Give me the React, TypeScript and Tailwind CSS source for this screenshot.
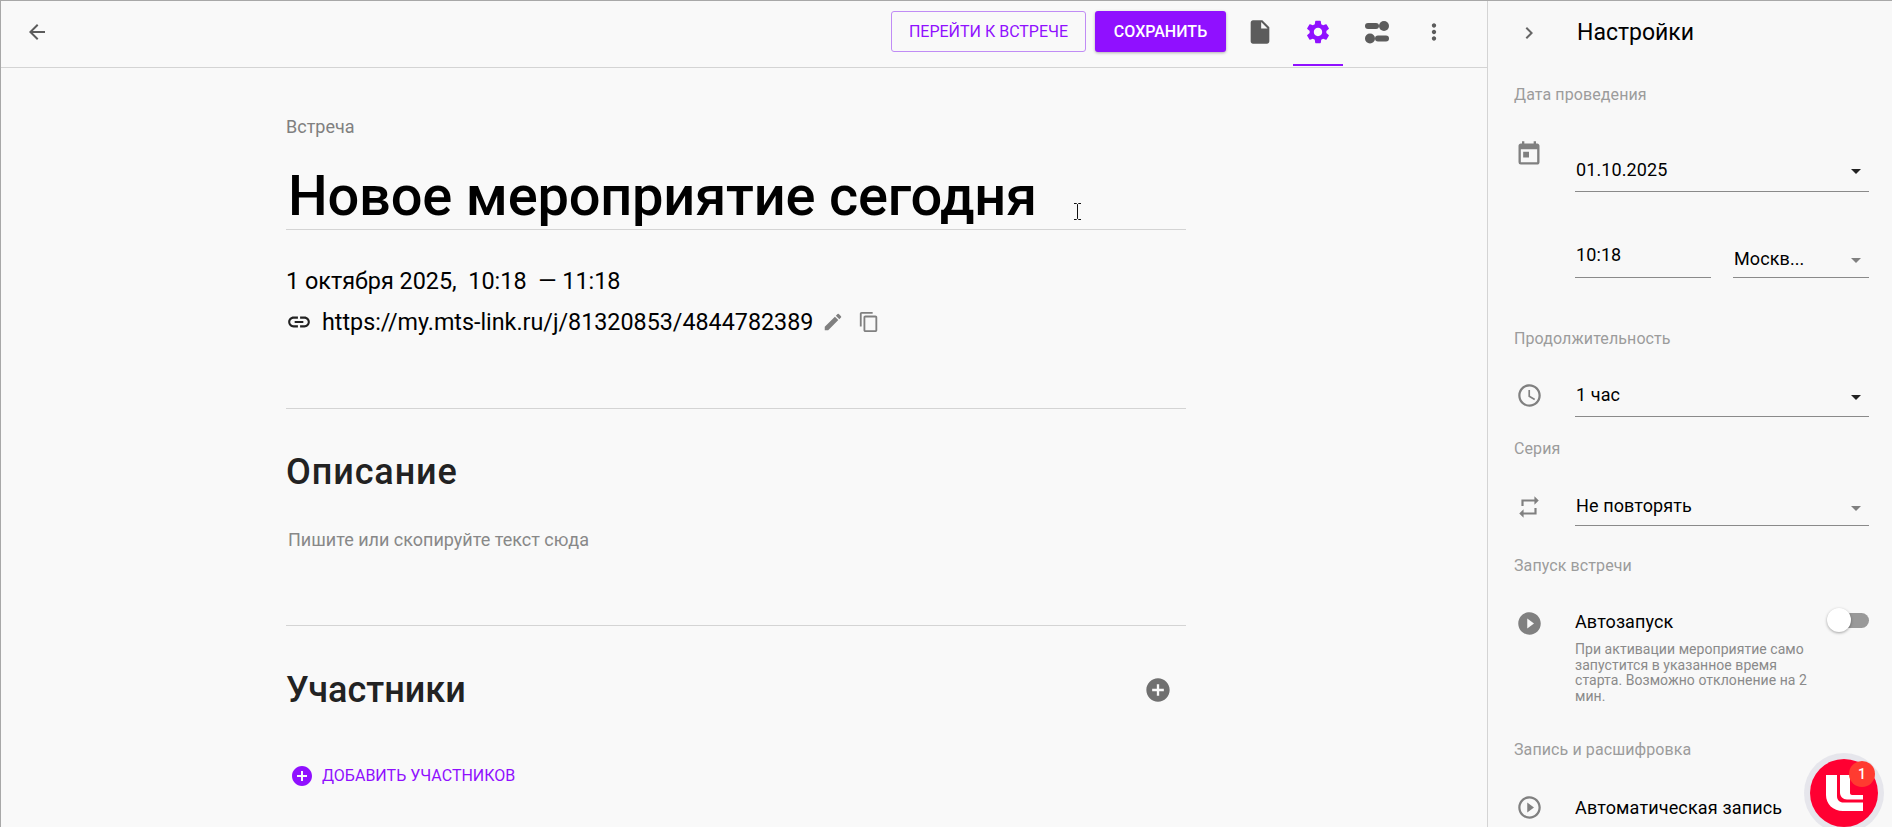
import type { ReactNode } from 'react';
import {
  MdAccessTime,
  MdAddCircle,
  MdArrowBack,
  MdArrowDropDown,
  MdChevronRight,
  MdContentCopy,
  MdEdit,
  MdInsertDriveFile,
  MdLink,
  MdMoreVert,
  MdPlayCircleFilled,
  MdPlayCircleOutline,
  MdRepeat,
  MdSettings,
  MdToday,
} from 'react-icons/md';

function TogglesIcon() {
  return (
    <svg width="26" height="26" viewBox="0 0 26 26" fill="#5c5c5c" aria-hidden="true">
      <rect x="1" y="4" width="14" height="6" rx="3" />
      <circle cx="20" cy="7" r="5" />
      <circle cx="6" cy="19.500" r="5" />
      <rect x="11" y="16.500" width="14" height="6" rx="3" />
    </svg>
  );
}

function Logo() {
  return (
    <div className="absolute left-[1809px] top-[758px] size-[68px] rounded-full bg-[#ff0032] shadow-[0_0_0_6px_rgba(190,190,210,0.3)]">
      <svg className="absolute left-0 top-0" width="68" height="68" viewBox="0 0 68 68" fill="none" aria-hidden="true">
        <path d="M16 16h11v21c0 4 2.500 6.500 6.500 6.500H53V52H33c-10 0-17-7-17-16V16z" fill="#fff" />
        <path d="M30 16h10v18c0 1 1 2 2 2h11v4.500H37c-4 0-7-3-7-7V16z" fill="#fff" />
      </svg>
      <span className="absolute left-[39px] top-[2px] flex size-[26px] items-center justify-center rounded-full bg-[#ff3b30] text-[14px] font-medium text-white">
        1
      </span>
    </div>
  );
}

function SectionLabel({ children, className }: { children: ReactNode; className: string }) {
  return <div className={`pl-[26px] text-[16px] leading-[20px] tracking-[0.1px] text-[#9c9c9c] ${className}`}>{children}</div>;
}

function Select({ value, muted, className }: { value: string; muted?: boolean; className: string }) {
  return (
    <div className={`flex items-center justify-between border-b border-[#8a8a8a] pl-[1px] ${className}`}>
      <span className="text-[18px] leading-[24px] tracking-[0.1px] text-black">{value}</span>
      <MdArrowDropDown className={`mr-[1px] mt-[3px] ${muted ? 'text-[#808080]' : 'text-[#222]'}`} size={24} />
    </div>
  );
}

function Settings() {
  return (
    <aside className="flex w-[405px] shrink-0 flex-col border-l border-[#d4d4d4] bg-[#f8f8f8]">
      <div className="flex h-[64px] items-center">
        <MdChevronRight className="ml-[29px] text-[#666]" size={24} />
        <span className="ml-[36px] text-[23px] leading-[32px] text-black">Настройки</span>
      </div>

      <SectionLabel className="mt-[20px]">Дата проведения</SectionLabel>
      <div className="mt-[36px] flex items-start pl-[27px] pr-[23px]">
        <MdToday className="mt-[-1px] shrink-0 text-[#808080]" size={28} />
        <Select value="01.10.2025" className="ml-[32px] mt-[9px] h-[42px] flex-1 pb-[2px]" />
      </div>
      <div className="mt-[48px] flex gap-[22px] pl-[87px] pr-[23px]">
        <div className="h-[38px] w-[136px] border-b border-[#8a8a8a] pl-[1px] pt-[3px] text-[18px] leading-[24px] tracking-[0.1px] text-black">
          10:18
        </div>
        <Select value="Москв..." muted className="h-[38px] flex-1" />
      </div>

      <SectionLabel className="mt-[51px]">Продолжительность</SectionLabel>
      <div className="mt-[25px] flex items-center pl-[28px] pr-[23px]">
        <MdAccessTime className="shrink-0 text-[#808080]" size={27} />
        <Select value="1 час" className="ml-[32px] h-[43px] flex-1" />
      </div>

      <SectionLabel className="mt-[22px]">Серия</SectionLabel>
      <div className="mt-[28px] flex items-center pl-[28px] pr-[23px]">
        <MdRepeat className="shrink-0 text-[#808080]" size={26} />
        <Select value="Не повторять" muted className="ml-[33px] h-[39px] flex-1" />
      </div>

      <SectionLabel className="mt-[30px]">Запуск встречи</SectionLabel>
      <div className="mt-[34px] flex items-start pl-[28px] pr-[23px]">
        <MdPlayCircleFilled className="shrink-0 text-[#808080]" size={27} />
        <div className="ml-[32px] flex-1">
          <div className="flex items-start justify-between">
            <span className="text-[18px] leading-[24px] tracking-[0.1px] text-black">Автозапуск</span>
            <div className="relative mt-[-2px] h-[24px] w-[42px]">
              <div className="absolute bottom-[4px] right-0 h-[15px] w-[36px] rounded-full bg-[#999]" />
              <div className="absolute left-0 top-0 size-[24px] rounded-full bg-white shadow-[0_1px_3px_rgba(0,0,0,0.35)]" />
            </div>
          </div>
          <p className="mt-[8px] w-[232px] text-[14px] leading-[15.6px] tracking-[0.05px] text-[#8a8a8a]">
            При активации мероприятие само запустится в указанное время старта. Возможно отклонение на 2 мин.
          </p>
        </div>
      </div>

      <SectionLabel className="mt-[36px]">Запись и расшифровка</SectionLabel>
      <div className="mt-[34px] flex items-center pl-[28px] pr-[23px]">
        <MdPlayCircleOutline className="shrink-0 text-[#808080]" size={27} />
        <span className="ml-[32px] text-[18px] leading-[24px] tracking-[0.15px] text-black">Автоматическая запись</span>
      </div>
    </aside>
  );
}

function Header() {
  return (
    <header className="flex h-[67px] shrink-0 items-center border-b border-[#d4d4d4] pb-[5px]">
      <MdArrowBack className="ml-[24px] text-[#5c5c5c]" size={24} />
      <div className="ml-auto flex items-center">
        <button className="h-[41px] w-[195px] rounded-[3px] border border-[#c08cf5] text-[16px] uppercase text-[#9010ff]">
          Перейти к встрече
        </button>
        <button className="ml-[9px] h-[41px] w-[131px] rounded-[3px] bg-[#9010ff] text-[16px] font-medium uppercase text-white shadow-[0_1px_3px_rgba(0,0,0,0.3)]">
          Сохранить
        </button>
        <MdInsertDriveFile className="ml-[20px] text-[#5c5c5c]" size={28} />
        <div className="relative ml-[19px] flex h-[41px] w-[50px] items-center justify-center">
          <MdSettings className="text-[#9010ff]" size={28} />
          <div className="absolute bottom-[-14px] left-0 h-[2px] w-[50px] bg-[#9010ff]" />
        </div>
        <div className="ml-[21px] flex">
          <TogglesIcon />
        </div>
        <MdMoreVert className="ml-[31px] text-[#5c5c5c]" size={26} />
        <div className="w-[40px]" />
      </div>
    </header>
  );
}

function Main() {
  return (
    <main className="relative flex min-w-0 flex-1 flex-col">
      <Header />
      <div className="ml-[285px] w-[900px]">
        <div className="mt-[49px] text-[18px] leading-[20px] text-[#808080]">Встреча</div>
        <div className="mt-[26px] border-b border-[#d4d4d4] pl-[2px] text-[56px] font-medium leading-[66px] tracking-[-0.2px] text-black">
          Новое мероприятие сегодня
        </div>
        <div className="mt-[37px] text-[23.4px] leading-[28px] text-black">1 октября 2025,&nbsp; 10:18 &nbsp;— 11:18</div>
        <div className="mt-[13px] flex items-center">
          <MdLink className="text-[#222]" size={26} />
          <span className="ml-[10px] text-[23.3px] leading-[28px] text-black">https://my.mts-link.ru/j/81320853/4844782389</span>
          <MdEdit className="ml-[9px] text-[#808080]" size={22} />
          <MdContentCopy className="ml-[14px] text-[#808080]" size={22} />
        </div>
        <div className="mt-[72px] border-t border-[#d4d4d4]" />
        <div className="mt-[43px] text-[36px] font-medium leading-[40px] tracking-[0.9px] text-[#222]">Описание</div>
        <div className="mt-[36px] pl-[2px] text-[18px] leading-[24px] text-[#888]">Пишите или скопируйте текст сюда</div>
        <div className="mt-[73px] border-t border-[#d4d4d4]" />
        <div className="mt-[44px] flex items-center justify-between pr-[14px]">
          <span className="text-[36px] font-medium leading-[40px] text-[#222]">Участники</span>
          <MdAddCircle className="text-[#707070]" size={28} />
        </div>
        <div className="mt-[54px] flex items-center pl-[4px]">
          <MdAddCircle className="text-[#9010ff]" size={24} />
          <span className="ml-[8px] text-[16px] uppercase leading-[24px] text-[#9010ff]">Добавить участников</span>
        </div>
      </div>
      <svg className="absolute left-[1072px] top-[202px]" width="9" height="17" viewBox="0 0 9 17" fill="none" stroke="#111" strokeWidth="1" aria-hidden="true">
        <path d="M1 .5h2.500l1 1 1-1H8M4.500 1.500v14M1 16.500h2.500l1-1 1 1H8" />
      </svg>
    </main>
  );
}

export default function App() {
  return (
    <div className="relative flex h-[827px] w-[1892px] overflow-hidden border-l border-t border-[#a8a8a8] bg-[#f9f9f9] font-['Roboto',sans-serif]">
      <Main />
      <Settings />
      <Logo />
    </div>
  );
}
